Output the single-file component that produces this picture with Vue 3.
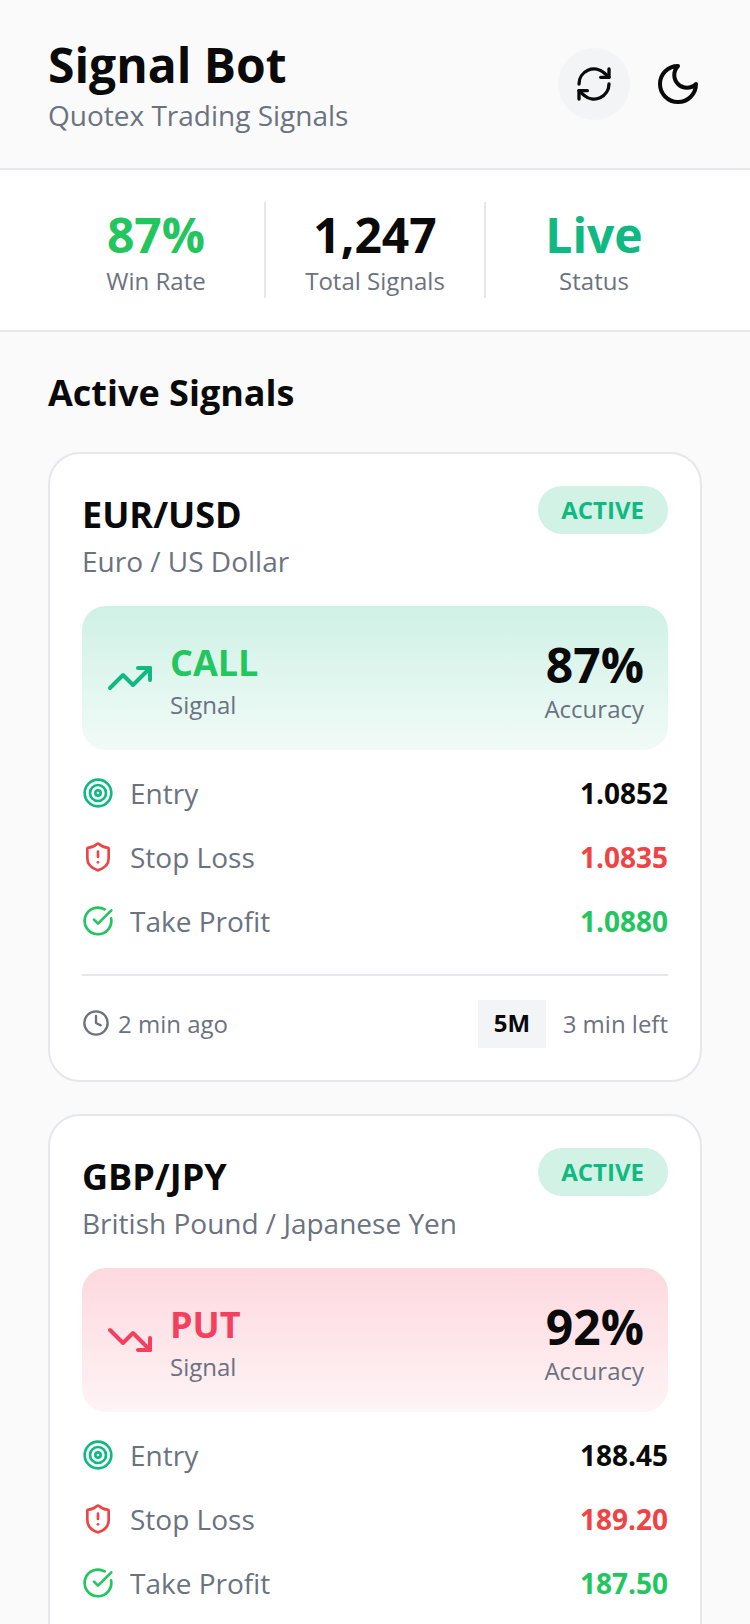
<template>
  <div class="page">
    <header class="top">
      <div class="brand">
        <h1>Signal Bot</h1>
        <p>Quotex Trading Signals</p>
      </div>
      <div class="top-btns">
        <button class="icon-btn refresh">
          <svg viewBox="0 0 24 24" class="ic-40"><path d="M3 12a9 9 0 0 1 15-6.7L21 8" /><path d="M21 3v5h-5" /><path d="M21 12a9 9 0 0 1-15 6.7L3 16" /><path d="M3 21v-5h5" /></svg>
        </button>
        <button class="icon-btn moon">
          <svg viewBox="0 0 24 24" class="ic-48"><path d="M12 3a6 6 0 0 0 9 9 9 9 0 1 1-9-9Z" /></svg>
        </button>
      </div>
    </header>

    <section class="stats">
      <div class="stat">
        <strong class="green">87%</strong>
        <span>Win Rate</span>
      </div>
      <div class="stat">
        <strong>1,247</strong>
        <span>Total Signals</span>
      </div>
      <div class="stat">
        <strong class="teal">Live</strong>
        <span>Status</span>
      </div>
    </section>

    <main class="content">
      <h2>Active Signals</h2>
      <article v-for="s in signals" :key="s.pair" class="card">
        <div class="card-head">
          <div>
            <h3>{{ s.pair }}</h3>
            <p>{{ s.name }}</p>
          </div>
          <span class="badge">ACTIVE</span>
        </div>

        <div class="signal" :class="s.type">
          <div class="signal-left">
            <svg v-if="s.type === 'call'" viewBox="0 0 24 24" class="ic-48 trend-up"><path d="m22 7-8.500 8.500-5-5L2 17" /><path d="M16 7h6v6" /></svg>
            <svg v-else viewBox="0 0 24 24" class="ic-48 trend-down"><path d="m22 17-8.500-8.500-5 5L2 7" /><path d="M16 17h6v-6" /></svg>
            <div class="signal-text">
              <div class="signal-name">{{ s.type.toUpperCase() }}</div>
              <div class="signal-sub">Signal</div>
            </div>
          </div>
          <div class="signal-right">
            <div class="acc">{{ s.accuracy }}</div>
            <div class="acc-sub">Accuracy</div>
          </div>
        </div>

        <div class="rows">
          <div class="row">
            <div class="row-label">
              <svg viewBox="0 0 24 24" class="ic-32 teal-s"><circle cx="12" cy="12" r="10" /><circle cx="12" cy="12" r="6" /><circle cx="12" cy="12" r="2" /></svg>
              Entry
            </div>
            <b>{{ s.entry }}</b>
          </div>
          <div class="row">
            <div class="row-label">
              <svg viewBox="0 0 24 24" class="ic-32 red-s"><path d="M20 13c0 5-3.500 7.500-7.700 9a1 1 0 0 1-.6 0C7.500 20.500 4 18 4 13V6a1 1 0 0 1 1-1c2 0 4.500-1.200 6.200-2.700a1.200 1.200 0 0 1 1.600 0C14.500 3.800 17 5 19 5a1 1 0 0 1 1 1Z" /><path d="M12 8v4" /><path d="M12 16h.01" /></svg>
              Stop Loss
            </div>
            <b class="red">{{ s.stop }}</b>
          </div>
          <div class="row">
            <div class="row-label">
              <svg viewBox="0 0 24 24" class="ic-32 green-s"><path d="M21.800 10A10 10 0 1 1 17 3.300" /><path d="m9 11 3 3L22 4" /></svg>
              Take Profit
            </div>
            <b class="green">{{ s.profit }}</b>
          </div>
        </div>

        <div class="card-foot">
          <div class="ago">
            <svg viewBox="0 0 24 24" class="ic-28 gray-s"><circle cx="12" cy="12" r="10" /><path d="M12 6v6l4 2" /></svg>
            {{ s.ago }}
          </div>
          <div class="foot-right">
            <span class="tf">5M</span>
            <span class="left">{{ s.left }}</span>
          </div>
        </div>
      </article>
    </main>
  </div>
</template>

<script setup>
const signals = [
  { pair: 'EUR/USD', name: 'Euro / US Dollar', type: 'call', accuracy: '87%', entry: '1.0852', stop: '1.0835', profit: '1.0880', ago: '2 min ago', left: '3 min left' },
  { pair: 'GBP/JPY', name: 'British Pound / Japanese Yen', type: 'put', accuracy: '92%', entry: '188.45', stop: '189.20', profit: '187.50', ago: '5 min ago', left: '1 min left' }
]
</script>

<style>
html, body { background: #fafafa; }
</style>

<style scoped>
.page { height: 1624px; overflow: hidden; background: #fafafa; color: #0a0a0a; font-family: "Open Sans", sans-serif; }
h1, h2, h3, p { margin: 0; }
svg { fill: none; stroke: currentColor; stroke-width: 2; stroke-linecap: round; stroke-linejoin: round; flex-shrink: 0; display: block; }
.ic-40 { width: 40px; height: 40px; }
.ic-48 { width: 48px; height: 48px; }
.ic-32 { width: 32px; height: 32px; }
.ic-28 { width: 28px; height: 28px; }

.top { display: flex; justify-content: space-between; align-items: center; padding: 32px 36px 32px 48px; border-bottom: 2px solid #e5e7eb; height: 170px; box-sizing: border-box; }
.brand { padding-bottom: 2px; }
.brand h1 { font-size: 48px; line-height: 62px; font-weight: 700; margin-top: 1px; }
.brand p { font-size: 28px; line-height: 38px; color: #6b7280; }
.top-btns { display: flex; gap: 12px; }
.icon-btn { width: 72px; height: 72px; padding: 16px; border: none; border-radius: 50%; background: transparent; color: #0a0a0a; }
.icon-btn.refresh { background: #f3f4f6; }
.icon-btn.moon { padding: 12px; }

.stats { display: grid; grid-template-columns: 218px 220px 216px; padding: 32px 48px; background: #fff; border-bottom: 2px solid #e5e7eb; }
.stat { display: flex; flex-direction: column; align-items: center; height: 96px; border-right: 2px solid #e5e7eb; }
.stat:last-child { border-right: none; }
.stat strong { font-size: 48px; line-height: 66px; font-weight: 700; }
.stat span { font-size: 24px; line-height: 26px; color: #6b7280; }
.green { color: #22c55e; }
.teal { color: #10b981; }
.red { color: #ef4444; }

.content { padding: 33px 48px 32px; }
.content h2 { font-size: 36px; line-height: 56px; font-weight: 700; margin-bottom: 31px; }
.card { background: #fff; border: 2px solid #e5e7eb; border-radius: 32px; padding: 32px; margin-bottom: 32px; }
.card-head { display: flex; justify-content: space-between; align-items: flex-start; margin-bottom: 27px; }
.card-head h3 { font-size: 36px; line-height: 56px; font-weight: 700; margin-top: 1px; }
.card-head p { font-size: 28px; line-height: 36px; color: #6b7280; }
.badge { background: #d1f2e5; color: #10b981; font-size: 24px; line-height: 32px; font-weight: 700; padding: 8px 24px 8px 23px; border-radius: 24px; }

.signal { display: flex; justify-content: space-between; align-items: center; height: 144px; box-sizing: border-box; padding: 24px; border-radius: 24px; }
.signal.call { background: linear-gradient(180deg, rgba(16, 185, 129, 0.2), rgba(16, 185, 129, 0.06)); }
.signal.put { background: linear-gradient(180deg, rgba(244, 63, 94, 0.2), rgba(244, 63, 94, 0.06)); }
.signal-left { display: flex; align-items: center; gap: 16px; }
.signal-text { padding-top: 5px; }
.trend-up { color: #10b981; }
.trend-down { color: #f43f5e; }
.signal-name { font-size: 36px; line-height: 48px; font-weight: 700; }
.call .signal-name { color: #22c55e; }
.put .signal-name { color: #f43f5e; }
.signal-sub { font-size: 24px; line-height: 36px; color: #6b7280; }
.signal-right { text-align: right; }
.acc { font-size: 48px; line-height: 59px; font-weight: 700; margin-top: 2px; }
.acc-sub { font-size: 24px; line-height: 30px; color: #6b7280; }

.rows { display: flex; flex-direction: column; gap: 16px; margin-top: 19px; padding-bottom: 29px; border-bottom: 2px solid #e5e7eb; }
.row { display: flex; justify-content: space-between; align-items: center; height: 48px; }
.row-label { display: flex; align-items: center; gap: 16px; font-size: 28px; color: #6b7280; }
.row b { font-size: 28px; font-weight: 700; }
.teal-s { color: #10b981; }
.red-s { color: #ef4444; }
.green-s { color: #22c55e; }
.gray-s { color: #6b7280; }

.card-foot { display: flex; justify-content: space-between; align-items: center; margin-top: 24px; font-size: 24px; color: #6b7280; }
.ago { display: flex; align-items: center; gap: 8px; margin-bottom: 2px; }
.foot-right { display: flex; align-items: center; gap: 17px; }
.left { margin-bottom: 2px; }
.tf { background: #f3f4f6; color: #0a0a0a; font-weight: 700; padding: 7px 15.5px 9px; line-height: 32px; }
</style>
